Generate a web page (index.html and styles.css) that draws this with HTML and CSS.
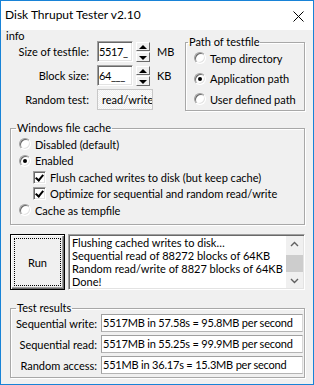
FILE: index.html
```html
<!DOCTYPE html>
<html lang="en">
<head>
  <meta charset="UTF-8">
  <title>Disk Thruput Tester v2.10</title>
  <link rel="stylesheet" href="styles.css">
</head>
<body>

  <div class="window">
    <div class="titlebar">
      <span class="title">Disk Thruput Tester v2.10</span>
      <svg class="close" width="11" height="11" viewBox="0 0 11 11">
        <path d="M0.5 0.5 L10.5 10.5 M10.5 0.5 L0.5 10.5" stroke="#000" stroke-width="1" fill="none"/>
      </svg>
    </div>

    <div class="client">

      <div class="top">
        <div class="left">
          <div class="info">info</div>
          <div class="row">
            <label>Size of testfile:</label>
            <span class="edit">5517_</span>
            <span class="spin"><span class="up"></span><span class="down"></span></span>
            <span class="unit">MB</span>
          </div>
          <div class="row">
            <label>Block size:</label>
            <span class="edit">64___</span>
            <span class="spin"><span class="up"></span><span class="down"></span></span>
            <span class="unit">KB</span>
          </div>
          <div class="row">
            <label>Random test:</label>
            <span class="edit disabled">read/write</span>
          </div>
        </div>

        <fieldset class="group path">
          <legend>Path of testfile</legend>
          <div class="opt"><span class="radio"></span>Temp directory</div>
          <div class="opt"><span class="radio on"></span>Application path</div>
          <div class="opt"><span class="radio"></span>User defined path</div>
        </fieldset>
      </div>

      <fieldset class="group cache">
        <legend>Windows file cache</legend>
        <div class="opt"><span class="radio"></span>Disabled (default)</div>
        <div class="opt"><span class="radio on"></span>Enabled</div>
        <div class="opt sub"><span class="check on"></span>Flush cached writes to disk (but keep cache)</div>
        <div class="opt sub"><span class="check on"></span>Optimize for sequential and random read/write</div>
        <div class="opt"><span class="radio"></span>Cache as tempfile</div>
      </fieldset>

      <div class="run-row">
        <button class="run"><span class="focus">Run</span></button>
        <div class="log">
          <div class="log-text">
            Flushing cached writes to disk…<br>
            Sequential read of 88272 blocks of 64KB<br>
            Random read/write of 8827 blocks of 64KB<br>
            Done!
          </div>
          <div class="scrollbar">
            <svg width="17" height="17" viewBox="0 0 17 17"><path d="M5 10 L8.5 6.5 L12 10" stroke="#606060" stroke-width="1.4" fill="none"/></svg>
            <div class="track"><div class="thumb"></div></div>
            <svg width="17" height="17" viewBox="0 0 17 17"><path d="M5 7 L8.5 10.5 L12 7" stroke="#606060" stroke-width="1.4" fill="none"/></svg>
          </div>
        </div>
      </div>

      <fieldset class="group results">
        <legend>Test results</legend>
        <div class="res">
          <label>Sequential write:</label>
          <span class="field">5517MB in 57.58s = 95.8MB per second</span>
        </div>
        <div class="res">
          <label>Sequential read:</label>
          <span class="field">5517MB in 55.25s = 99.9MB per second</span>
        </div>
        <div class="res">
          <label>Random access:</label>
          <span class="field">551MB in 36.17s = 15.3MB per second</span>
        </div>
      </fieldset>

    </div>
  </div>

</body>
</html>
```
FILE: styles.css
```css
* {
  box-sizing: border-box;
}

body {
  margin: 0;
  font-family: Lato, "Liberation Sans", sans-serif;
  font-size: 11px;
  color: #000;
}

.window {
  width: 314px;
  height: 385px;
  border: 1px solid #1883d7;
  background: #f0f0f0;
  display: flex;
  flex-direction: column;
}

.titlebar {
  height: 29px;
  flex: none;
  background: #fff;
  display: flex;
  align-items: center;
  justify-content: space-between;
  padding: 0 9px 3px 4px;
  font-size: 12px;
}

.close {
  display: block;
  margin-top: 4px;
}

.client {
  flex: 1;
}

/* top part: sizes on the left, path box on the right */
.top {
  display: flex;
  height: 81px;
}

.info {
  height: 11px;
  line-height: 11px;
  padding-left: 5px;
}

.row {
  display: flex;
  align-items: center;
  height: 21px;
  margin-top: 3px;
}

.info + .row {
  margin-top: 0;
}

.row label {
  width: 88px;
  margin-right: 8px;
  text-align: right;
}

.edit {
  width: 36px;
  height: 21px;
  padding: 2px 0 0 1px;
  background: #fff;
  border: 1px solid;
  border-color: #a0a0a0 #fff #fff #a0a0a0;
  box-shadow: inset 1px 1px #696969, inset -1px -1px #e3e3e3;
  line-height: 15px;
  letter-spacing: -0.4px;
  white-space: nowrap;
  overflow: hidden;
}

.edit.disabled {
  width: 56px;
  border-color: #c8c8c8;
  box-shadow: none;
  padding: 2px 0 0 4px;
  letter-spacing: 0;
  background: repeating-conic-gradient(#f0f0f0 0 25%, #fbfbfb 0 50%) 0 0 / 2px 2px;
}

.spin {
  width: 14px;
  height: 20px;
  margin-left: 3px;
  display: flex;
  flex-direction: column;
  gap: 1px;
}

.spin span {
  flex: 1;
  position: relative;
  background: #f0f0f0;
  border: 1px solid;
  border-color: #fff #696969 #696969 #fff;
}

.spin span::after {
  content: "";
  position: absolute;
  left: 2px;
  border-left: 4px solid transparent;
  border-right: 4px solid transparent;
}

.spin .up::after {
  top: 2px;
  border-bottom: 4px solid #000;
}

.spin .down::after {
  top: 3px;
  border-top: 4px solid #000;
}

.unit {
  margin-left: 7px;
}

/* group boxes */
.group {
  margin: 0;
  padding: 0 0 0 8px;
  border: 1px solid #a8a8a8;
  box-shadow: inset 1px 1px #fff, 1px 1px #fff;
  min-width: 0;
}

.group legend {
  padding: 0 1px;
  line-height: 12px;
}

.path {
  width: 120px;
  height: 75px;
  margin: 6px 8px 0 auto;
}

.path legend {
  margin-left: -6px;
}

.path .opt {
  height: 20.5px;
}

.opt {
  display: flex;
  align-items: center;
  gap: 4px;
  white-space: nowrap;
}

.radio {
  width: 12px;
  height: 12px;
  border-radius: 50%;
  background: #fff;
  border: 1px solid;
  border-color: #a0a0a0 #fff #fff #a0a0a0;
  box-shadow: inset 1px 1px #696969, inset -1px -1px #e3e3e3;
  display: flex;
  align-items: center;
  justify-content: center;
}

.radio.on::after {
  content: "";
  width: 4px;
  height: 4px;
  border-radius: 50%;
  background: #000;
}

.check {
  width: 13px;
  height: 13px;
  background: #fff;
  border: 1px solid;
  border-color: #a0a0a0 #fff #fff #a0a0a0;
  box-shadow: inset 1px 1px #696969, inset -1px -1px #e3e3e3;
  position: relative;
}

.check.on::after {
  content: "";
  position: absolute;
  left: 3px;
  top: 1px;
  width: 3px;
  height: 6px;
  border: solid #000;
  border-width: 0 2px 2px 0;
  transform: rotate(40deg);
}

.cache {
  width: 295px;
  height: 103px;
  margin: 11px 0 0 9px;
  padding-top: 2px;
}

.cache legend {
  margin-left: -3px;
}

.cache .opt {
  height: 16.5px;
}

.cache .sub {
  margin-left: 14px;
}

/* run button and log */
.run-row {
  display: flex;
  gap: 3px;
  height: 56px;
  margin: 9px 0 0 9px;
}

.run {
  width: 55px;
  height: 56px;
  padding: 3px;
  font: inherit;
  background: #f0f0f0;
  border: 1px solid #000;
  box-shadow: inset 1px 1px #fff, inset -1px -1px #696969, inset -2px -2px #a0a0a0;
}

.focus {
  display: flex;
  align-items: center;
  justify-content: center;
  height: 100%;
  border: 1px dotted #000;
}

.log {
  width: 237px;
  display: flex;
  background: #fff;
  border: 1px solid;
  border-color: #a0a0a0 #fff #fff #a0a0a0;
  box-shadow: inset 1px 1px #696969, inset -1px -1px #e3e3e3;
  padding: 1px;
}

.log-text {
  flex: 1;
  padding: 0 0 0 2px;
  line-height: 13px;
  white-space: nowrap;
  overflow: hidden;
}

.scrollbar {
  width: 17px;
  display: flex;
  flex-direction: column;
  background: #f0f0f0;
}

.scrollbar svg {
  display: block;
  flex: none;
}

.track {
  flex: 1;
  padding-top: 2px;
}

.thumb {
  height: 17px;
  background: #cdcdcd;
}

/* results */
.results {
  width: 295px;
  height: 76px;
  margin: 12px 0 0 9px;
  padding: 0;
}

.results legend {
  margin-left: 5px;
}

.res {
  display: flex;
  align-items: center;
  height: 18px;
  margin-bottom: 3px;
}

.res label {
  width: 86px;
  margin-right: 4px;
  text-align: right;
}

.field {
  width: 202px;
  height: 18px;
  padding-left: 1px;
  line-height: 16px;
  letter-spacing: -0.2px;
  background: #fff;
  border: 1px solid;
  border-color: #a0a0a0 #d8d8d8 #b4b4b4 #a0a0a0;
  white-space: nowrap;
  overflow: hidden;
}
```
